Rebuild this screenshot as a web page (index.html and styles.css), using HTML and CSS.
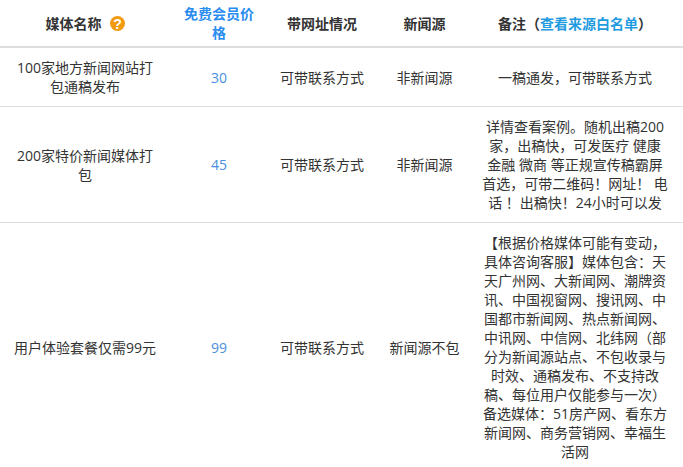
FILE: index.html
```html
<!DOCTYPE html>
<html lang="zh-CN">
<head>
<meta charset="utf-8">
<title>媒体列表</title>
<link rel="stylesheet" href="styles.css">
</head>
<body>
<table class="media-table">
<colgroup>
<col class="col-name"><col class="col-price"><col class="col-url"><col class="col-source"><col class="col-note">
</colgroup>
<thead>
<tr>
<th class="cell-name"><span class="name-head">媒体名称<svg class="help" width="15" height="15" viewBox="0 0 15 15"><circle cx="7.5" cy="7.5" r="7.5" fill="#f29a11"/><text x="7.5" y="12.5" text-anchor="middle" class="help-mark">?</text></svg></span></th>
<th class="vip">免费会员价格</th>
<th>带网址情况</th>
<th>新闻源</th>
<th class="cell-note">备注<span class="p">（</span><a class="white-list" href="#">查看来源白名单</a><span class="p">）</span></th>
</tr>
</thead>
<tbody>
<tr>
<td class="cell-name">100家地方新闻网站打包通稿发布</td>
<td class="price">30</td>
<td>可带联系方式</td>
<td>非新闻源</td>
<td class="cell-note">一稿通发，可带联系方式</td>
</tr>
<tr>
<td class="cell-name">200家特价新闻媒体打包</td>
<td class="price">45</td>
<td>可带联系方式</td>
<td>非新闻源</td>
<td class="cell-note">详情查看案例。随机出稿200家，出稿快，可发医疗 健康 金融 微商 等正规宣传稿霸屏首选，可带二维码<span class="p">！</span>网址<span class="p">！</span> 电话 <span class="p">！</span>出稿快<span class="p">！</span>24小时可以发</td>
</tr>
<tr>
<td class="cell-name">用户体验套餐仅需99元</td>
<td class="price">99</td>
<td>可带联系方式</td>
<td>新闻源不包</td>
<td class="cell-note">【根据价格媒体可能有变动，具体咨询客服】媒体包含<span class="p">：</span>天天广州网、大新闻网、潮牌资讯、中国视窗网、搜讯网、中国都市新闻网、热点新闻网、中讯网、中信网、北纬网<span class="p">（</span>部分为新闻源站点、不包收录与时效、通稿发布、不支持改稿、每位用户仅能参与一次<span class="p">）</span>备选媒体<span class="p">：</span>51房产网、看东方新闻网、商务营销网、幸福生活网</td>
</tr>
</tbody>
</table>
</body>
</html>
```
FILE: styles.css
```css
html, body {
  margin: 0;
  padding: 0;
  background: #fff;
  overflow: hidden;
}
body {
  font-family: "Open Sans", "Noto Sans CJK SC", sans-serif;
  font-size: 14px;
  line-height: 19px;
  color: #333;
}
.media-table {
  width: 683px;
  table-layout: fixed;
  border-collapse: separate;
  border-spacing: 0;
}
.col-name { width: 170px; }
.col-price { width: 98px; }
.col-url { width: 108px; }
.col-source { width: 97px; }
.col-note { width: 210px; }
th, td {
  padding: 10px 8px;
  text-align: center;
  vertical-align: middle;
  font-weight: 400;
  border-bottom: 1px solid #ddd;
}
th {
  font-weight: 700;
  padding-top: 4px;
  padding-bottom: 4px;
  height: 38px;
  border-bottom: 2px solid #ddd;
}
.cell-name {
  padding-left: 12px;
  padding-right: 12px;
}
.cell-note {
  padding-left: 8px;
  padding-right: 14px;
}
.name-head {
  display: inline-flex;
  align-items: center;
  gap: 8px;
}
.help { flex: none; }
.help-mark {
  font-family: "Liberation Sans", sans-serif;
  font-size: 14px;
  font-weight: 700;
  fill: #fff;
}
.p { font-family: "Noto Sans CJK TC", sans-serif; }
.vip { color: #2a8cf0; }
.price { color: #4a8fe0; }
.white-list {
  color: #1f9be0;
  text-decoration: none;
}
```
